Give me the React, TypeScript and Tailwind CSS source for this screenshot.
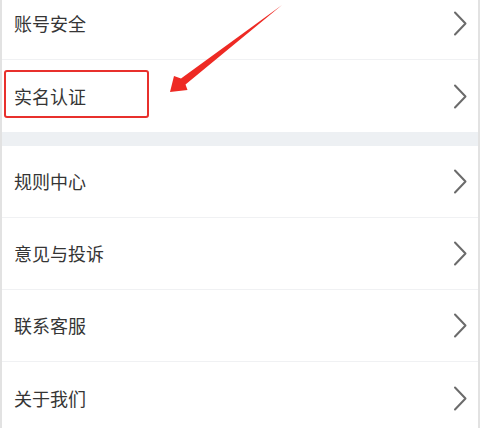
import React from "react";

const Chevron = () => (
  <svg width="14" height="25" viewBox="0 0 14 25" fill="none">
    <polyline
      points="2,1.5 12.5,12.5 2,23.5"
      stroke="#6b6b6b"
      strokeWidth="2"
      strokeLinecap="round"
      strokeLinejoin="round"
    />
  </svg>
);

const Row = ({ label, last }: { label: string; last?: boolean }) => (
  <div
    className={`flex h-[72px] items-center justify-between pl-[12px] pr-[11px] ${
      last ? "" : "border-b border-[#f0f1f3]"
    }`}
  >
    <span className="text-[18px] text-[#353535]">{label}</span>
    <Chevron />
  </div>
);

export default function App() {
  return (
    <div
      className="relative h-[428px] w-[480px] overflow-hidden bg-white border-l-2 border-r-2 border-[#e2e2e2]"
      style={{ fontFamily: '"Noto Sans CJK SC", "Noto Sans", sans-serif' }}
    >
      <div className="-mt-[12px]">
        <Row label="账号安全" />
        <Row label="实名认证" last />
        <div className="h-[14px] bg-[#edf0f3]" />
        <Row label="规则中心" />
        <Row label="意见与投诉" />
        <Row label="联系客服" />
        <Row label="关于我们" last />
      </div>

      {/* annotation box */}
      <div className="absolute left-[2px] top-[70px] h-[48px] w-[145px] rounded-[3px] border-2 border-[#e8302c]" />

      {/* annotation arrow */}
      <svg className="absolute left-0 top-0" width="480" height="428">
        <polygon
          points="280,5 183.5,84.5 185.5,90 168,92 172,76 179,78.5"
          fill="#ee2a24"
        />
      </svg>
    </div>
  );
}
